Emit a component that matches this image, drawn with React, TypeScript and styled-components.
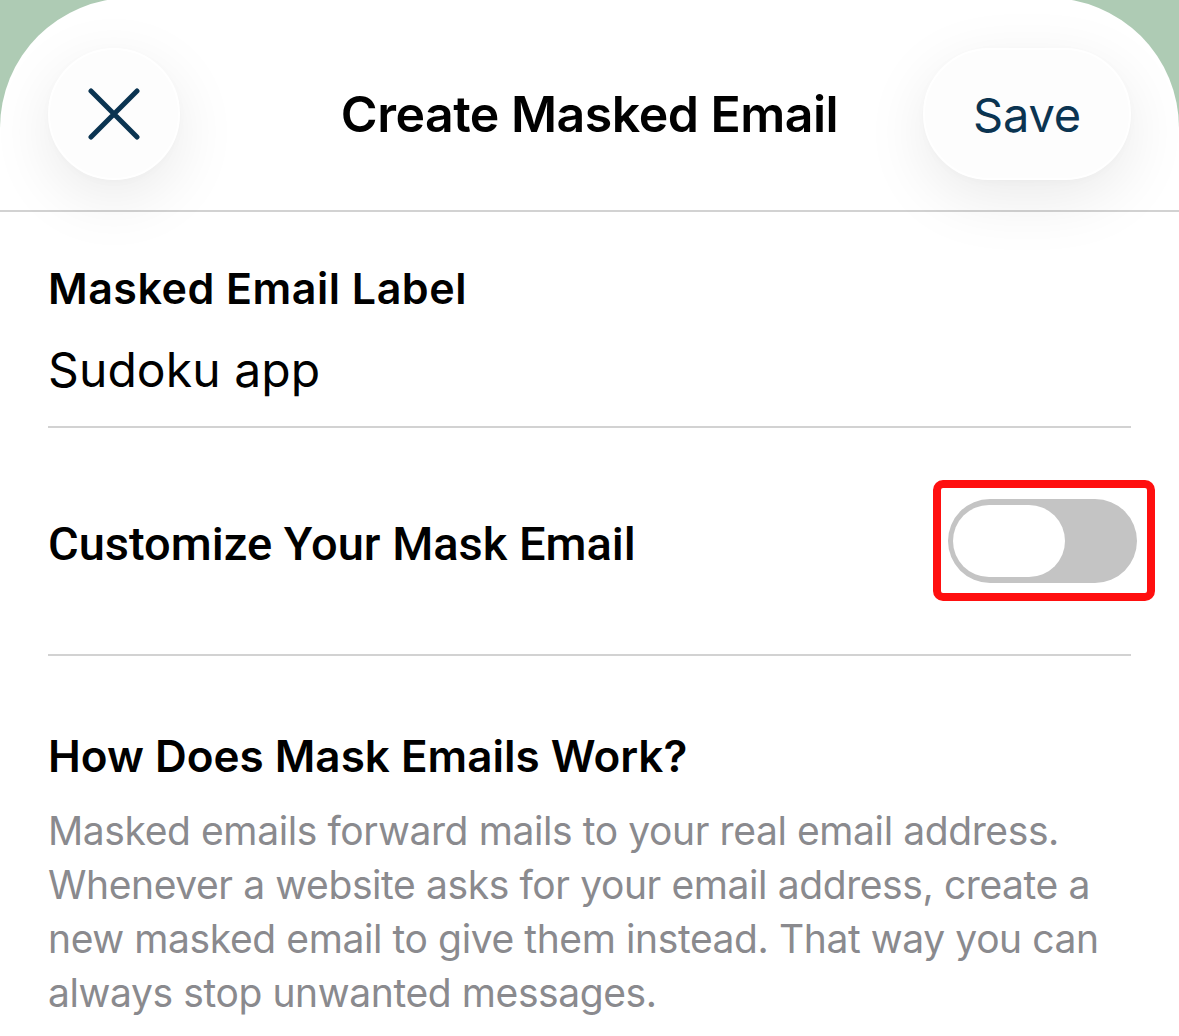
import React from "react";
import styled, { createGlobalStyle } from "styled-components";

const Global = createGlobalStyle`
  html, body {
    margin: 0;
    padding: 0;
    background: #aecbb4;
    overflow: hidden;
  }
  body {
    font-family: Inter, "Noto Sans", "Liberation Sans", sans-serif;
    -webkit-font-smoothing: antialiased;
  }
`;

const Sheet = styled.div`
  margin-top: -2px;
  min-height: 1040px;
  background: #ffffff;
  border-radius: 130px 130px 0 0;
  overflow: hidden;
  display: flex;
  flex-direction: column;
`;

const Header = styled.header`
  height: 214px;
  box-sizing: border-box;
  padding: 50px 48px 0 48px;
  display: grid;
  grid-template-columns: 1fr auto 1fr;
  align-items: start;
  border-bottom: 2px solid #d2d2d2;
  position: relative;
  z-index: 1;
`;

const GlassButton = styled.button<{ $wide?: boolean; $end?: boolean }>`
  justify-self: ${(p) => (p.$end ? "end" : "start")};
  height: 132px;
  width: ${(p) => (p.$wide ? "208px" : "132px")};
  border-radius: 66px;
  background: #fdfdfd;
  border: 2px solid #ffffff;
  box-shadow: 0 18px 64px rgba(0, 0, 0, 0.085), 0 2px 10px rgba(0, 0, 0, 0.02);
  display: flex;
  align-items: center;
  justify-content: center;
  padding: 0;
  color: #0b3451;
  font-family: Inter, "Noto Sans", sans-serif;
  font-size: 47px;
  font-weight: 400;
  letter-spacing: -0.2px;
  cursor: pointer;
`;

const Title = styled.h1`
  margin: 0;
  height: 132px;
  display: flex;
  align-items: center;
  font-size: 50px;
  font-weight: 600;
  letter-spacing: -0.5px;
  color: #000;
`;

const Content = styled.main`
  padding: 0 48px;
  display: flex;
  flex-direction: column;
`;

const LabelBlock = styled.section`
  padding: 50px 0 27px 0;
  border-bottom: 2px solid #d2d2d2;
  display: flex;
  flex-direction: column;
  gap: 27px;
`;

const FieldLabel = styled.div`
  font-size: 43px;
  line-height: 52px;
  font-weight: 600;
  letter-spacing: 0.5px;
  color: #000;
`;

const FieldValue = styled.div`
  font-size: 48px;
  line-height: 58px;
  font-weight: 400;
  letter-spacing: 0.1px;
  color: #000;
`;

const ToggleRow = styled.section`
  height: 228px;
  box-sizing: border-box;
  border-bottom: 2px solid #d2d2d2;
  display: flex;
  align-items: center;
  justify-content: space-between;
`;

const RowLabel = styled.div`
  font-family: Roboto, Inter, sans-serif;
  font-size: 47px;
  font-weight: 500;
  letter-spacing: 0;
  color: #000;
  padding-top: 4px;
`;

const ToggleWrap = styled.div`
  position: relative;
  margin-right: -6px;
  cursor: pointer;
`;

const Highlight = styled.div`
  position: absolute;
  top: -19px;
  bottom: -18px;
  left: -15px;
  right: -18px;
  border: 8px solid #ff0f0f;
  border-radius: 10px;
  pointer-events: none;
`;

const Track = styled.div<{ $on: boolean }>`
  width: 189px;
  height: 84px;
  border-radius: 42px;
  background: ${(p) => (p.$on ? "#34c759" : "#c4c4c4")};
  box-sizing: border-box;
  padding: 6px 5px;
  display: flex;
  justify-content: ${(p) => (p.$on ? "flex-end" : "flex-start")};
`;

const Knob = styled.div`
  width: 112px;
  height: 72px;
  border-radius: 36px;
  background: #ffffff;
`;

const InfoBlock = styled.section`
  padding-top: 73px;
  display: flex;
  flex-direction: column;
  gap: 21px;
`;

const InfoTitle = styled.h2`
  margin: 0;
  font-size: 44px;
  line-height: 54px;
  font-weight: 600;
  letter-spacing: 0;
  color: #000;
`;

const InfoText = styled.p`
  margin: 0;
  font-size: 39px;
  line-height: 54px;
  font-weight: 400;
  letter-spacing: -0.4px;
  color: #8a8a8e;
`;

const CloseIcon = () => (
  <svg width="52" height="52" viewBox="0 0 52 52" aria-hidden="true">
    <path
      d="M3 3 L49 49 M49 3 L3 49"
      stroke="#0b3451"
      strokeWidth="5"
      strokeLinecap="round"
      fill="none"
    />
  </svg>
);

export default function App() {
  const [on, setOn] = React.useState(false);
  return (
    <>
      <Global />
      <Sheet>
        <Header>
          <GlassButton aria-label="Close">
            <CloseIcon />
          </GlassButton>
          <Title>Create Masked Email</Title>
          <GlassButton $wide $end>
            Save
          </GlassButton>
        </Header>
        <Content>
          <LabelBlock>
            <FieldLabel>Masked Email Label</FieldLabel>
            <FieldValue>Sudoku app</FieldValue>
          </LabelBlock>
          <ToggleRow>
            <RowLabel>Customize Your Mask Email</RowLabel>
            <ToggleWrap onClick={() => setOn(!on)}>
              <Track $on={on}>
                <Knob />
              </Track>
              <Highlight />
            </ToggleWrap>
          </ToggleRow>
          <InfoBlock>
            <InfoTitle>How Does Mask Emails Work?</InfoTitle>
            <InfoText>
              Masked emails forward mails to your real email address.
              <br />
              Whenever a website asks for your email address, create a
              <br />
              new masked email to give them instead. That way you can
              <br />
              always stop unwanted messages.
            </InfoText>
          </InfoBlock>
        </Content>
      </Sheet>
    </>
  );
}
